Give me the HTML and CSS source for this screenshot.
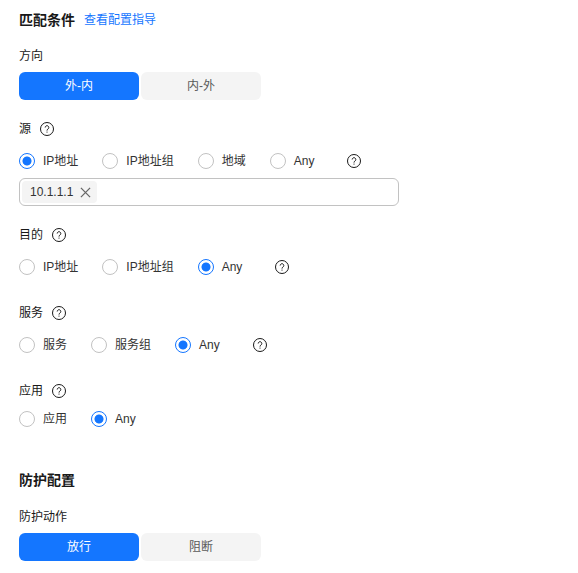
FILE: index.html
```html
<!DOCTYPE html>
<html lang="zh-CN">
<head>
    <meta charset="UTF-8">
    <meta name="viewport" content="width=device-width, initial-scale=1.0">
    <title>匹配条件</title>
    <link rel="stylesheet" href="styles.css">
</head>
<body>
    <svg class="icon-defs" width="0" height="0" aria-hidden="true">
        <symbol id="help" viewBox="0 0 14 14">
            <circle cx="7" cy="7" r="6.5" fill="none" stroke="currentColor"/>
            <path d="M5.2 5.5a1.8 1.8 0 1 1 2.8 1.5c-.7.5-1 .8-1 1.6" fill="none" stroke="currentColor"/>
            <rect x="6.5" y="9.6" width="1" height="1"/>
        </symbol>
    </svg>

    <div class="title-row">
        <h2 class="section-title">匹配条件</h2>
        <a class="guide-link" href="#">查看配置指导</a>
    </div>

    <div class="field-label label-direction">方向</div>
    <div class="toggle">
        <button class="toggle-btn active" type="button">外-内</button>
        <button class="toggle-btn" type="button">内-外</button>
    </div>

    <div class="field-label label-source">源 <svg class="help"><use href="#help"/></svg></div>
    <div class="radio-row row-source">
        <label class="radio checked"><i></i>IP地址</label>
        <label class="radio"><i></i>IP地址组</label>
        <label class="radio"><i></i>地域</label>
        <label class="radio"><i></i>Any</label>
        <svg class="help help-row"><use href="#help"/></svg>
    </div>
    <div class="tag-input">
        <span class="tag">10.1.1.1
            <svg class="tag-close" viewBox="0 0 12 12"><path d="M1 1l10 10M11 1L1 11" fill="none" stroke="currentColor" stroke-width="1.4"/></svg>
        </span>
    </div>

    <div class="field-label label-dest">目的 <svg class="help"><use href="#help"/></svg></div>
    <div class="radio-row row-dest">
        <label class="radio"><i></i>IP地址</label>
        <label class="radio"><i></i>IP地址组</label>
        <label class="radio checked"><i></i>Any</label>
        <svg class="help help-row"><use href="#help"/></svg>
    </div>

    <div class="field-label label-service">服务 <svg class="help"><use href="#help"/></svg></div>
    <div class="radio-row row-service">
        <label class="radio"><i></i>服务</label>
        <label class="radio"><i></i>服务组</label>
        <label class="radio checked"><i></i>Any</label>
        <svg class="help help-row"><use href="#help"/></svg>
    </div>

    <div class="field-label label-app">应用 <svg class="help"><use href="#help"/></svg></div>
    <div class="radio-row row-app">
        <label class="radio"><i></i>应用</label>
        <label class="radio checked"><i></i>Any</label>
    </div>

    <h2 class="section-title title-protect">防护配置</h2>

    <div class="field-label label-action">防护动作</div>
    <div class="toggle">
        <button class="toggle-btn active" type="button">放行</button>
        <button class="toggle-btn" type="button">阻断</button>
    </div>
</body>
</html>
```

FILE: styles.css
```css
html, body {
    height: 573px;
    overflow: hidden;
}

body {
    margin: 0;
    padding: 12px 0 0 19px;
    box-sizing: border-box;
    font-family: "Liberation Sans", "Noto Sans CJK SC", sans-serif;
    font-size: 12px;
    line-height: 16px;
    color: #252b3a;
    background-color: #fff;
}

.icon-defs {
    position: absolute;
}

.title-row {
    display: flex;
    align-items: center;
    gap: 9px;
}

.section-title {
    margin: 0;
    font-size: 14px;
    line-height: 16px;
    font-weight: bold;
    color: #191919;
}

.guide-link {
    color: #1476ff;
    text-decoration: none;
}

.field-label {
    display: flex;
    align-items: center;
    gap: 9px;
    height: 16px;
    color: #191919;
}

.label-direction { margin-top: 20px; }
.label-source { margin-top: 21px; }
.label-dest { margin-top: 21px; }
.label-service { margin-top: 30px; }
.label-app { margin-top: 30px; }
.label-action { margin-top: 21px; }

.title-protect { margin-top: 45px; }

.help {
    width: 14px;
    height: 14px;
    flex: none;
    color: #191919;
    fill: #191919;
}

.help-row {
    margin-left: 9px;
}

.toggle {
    display: flex;
    gap: 2px;
    margin-top: 8px;
}

.toggle-btn {
    width: 120px;
    height: 28px;
    padding: 0;
    border: none;
    border-radius: 6px;
    background-color: #f4f4f4;
    color: #595959;
    font: inherit;
}

.toggle-btn.active {
    background-color: #1476ff;
    color: #fff;
}

.radio-row {
    display: flex;
    align-items: center;
    gap: 24px;
    height: 16px;
}

.row-source { margin-top: 16px; }
.row-dest { margin-top: 16px; }
.row-service { margin-top: 16px; }
.row-app { margin-top: 12px; }

.radio {
    display: flex;
    align-items: center;
    gap: 8px;
    color: #333;
}

.radio i {
    width: 16px;
    height: 16px;
    box-sizing: border-box;
    border: 1px solid #c2c2c2;
    border-radius: 50%;
    background-color: #fff;
}

.radio.checked i {
    border-color: #1476ff;
    background: radial-gradient(circle, #1476ff 0, #1476ff 4.1px, #fff 4.9px);
}

.tag-input {
    display: flex;
    align-items: center;
    box-sizing: border-box;
    width: 380px;
    height: 28px;
    margin-top: 9px;
    padding: 0 2px;
    border: 1px solid #c2c2c2;
    border-radius: 6px;
}

.tag {
    display: flex;
    align-items: center;
    gap: 7px;
    height: 22px;
    padding: 0 6px 0 8px;
    border-radius: 4px;
    background-color: #f4f4f4;
    color: #333;
}

.tag-close {
    width: 11px;
    height: 11px;
    color: #666;
}
```
